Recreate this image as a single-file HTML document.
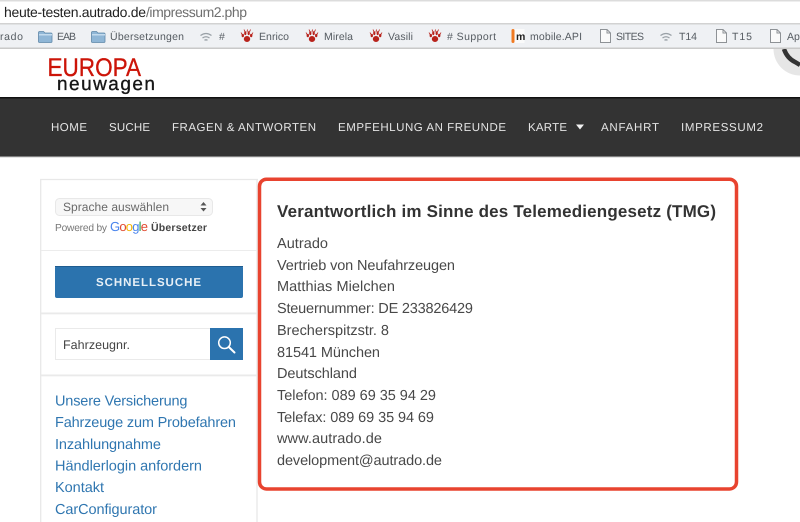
<!DOCTYPE html>
<html lang="de">
<head>
<meta charset="utf-8">
<title>Impressum</title>
<style>
html,body{margin:0;padding:0;background:#fff;width:800px;height:522px;overflow:hidden}
svg{display:block;filter:blur(.3px)}
text{font-family:"Liberation Sans",sans-serif;text-rendering:geometricPrecision}
.bm{font-size:10.5px;fill:#555b61}
.nav{font-size:11.5px;fill:#e4e4e4}
.b{font-size:14.5px;fill:#484848}
.l{font-size:14.5px;fill:#2f76b0}
</style>
</head>
<body>
<svg xmlns="http://www.w3.org/2000/svg" width="800" height="522" viewBox="0 0 800 522">
<defs>
<g id="folder"><path d="M0.5 3.5a1 1 0 0 1 1-1h4l1.500 1.500h6a1 1 0 0 1 1 1v7.500a1 1 0 0 1-1 1h-11.500a1 1 0 0 1-1-1z" fill="#8fb6d6" stroke="#5f88a8" stroke-width=".8"/><rect x="1" y="5" width="13" height="1.500" fill="#c3dbee"/></g>
<g id="wifi" fill="none" stroke="#9aa1a7" stroke-width="1.300"><path d="M0.500 3.500Q6 -0.500 11.500 3.500"/><path d="M2.500 6Q6 3.500 9.500 6"/><path d="M4.500 8.300Q6 7.300 7.500 8.300"/></g>
<g id="paw" fill="#b8231c"><ellipse cx="6" cy="9.500" rx="3.200" ry="3"/><ellipse cx="1.800" cy="6" rx="1.200" ry="1.800"/><ellipse cx="4.300" cy="3.700" rx="1.100" ry="1.900"/><ellipse cx="7.700" cy="3.700" rx="1.100" ry="1.900"/><ellipse cx="10.200" cy="6" rx="1.200" ry="1.800"/><path d="M3 0l1 2.500M6.500 0l-.5 2.500M9.500 0l-1 2.500M0 3l1 2M12 3l-1 2" stroke="#b8231c" stroke-width=".8"/></g>
<g id="doc"><path d="M.5.500h6.500l3.500 3.500v9.500h-10z" fill="#fafafa" stroke="#8e9296" stroke-width="1"/><path d="M7 .500v3.500h3.500" fill="none" stroke="#8e9296" stroke-width="1"/></g>
</defs>

<rect width="800" height="522" fill="#fff"/>

<!-- URL bar -->
<rect width="800" height="1.500" fill="#dcdcdc"/>
<text x="4" y="17" font-size="14" fill="#222" textLength="142">heute-testen.autrado.de</text>
<text x="146" y="17" font-size="14" fill="#6f6f6f" textLength="101">/impressum2.php</text>

<!-- Bookmarks bar -->
<rect y="23" width="800" height="26" fill="#eff1f4"/>
<rect y="23" width="800" height="1.500" fill="#d2d2d2"/>
<rect y="47.500" width="800" height="1.500" fill="#c9c9c9"/>
<text class="bm" x="0" y="40" textLength="23">rado</text>
<use href="#folder" x="38" y="29"/>
<text class="bm" x="57" y="40" textLength="19">EAB</text>
<use href="#folder" x="91" y="29"/>
<text class="bm" x="110" y="40" textLength="74">Übersetzungen</text>
<use href="#wifi" x="200" y="32"/>
<text class="bm" x="219" y="40">#</text>
<use href="#paw" x="241" y="29.500"/>
<text class="bm" x="259" y="40" textLength="30">Enrico</text>
<use href="#paw" x="306" y="29.500"/>
<text class="bm" x="324" y="40" textLength="29">Mirela</text>
<use href="#paw" x="370" y="29.500"/>
<text class="bm" x="388" y="40" textLength="25">Vasili</text>
<use href="#paw" x="429" y="29.500"/>
<text class="bm" x="447" y="40" textLength="49"># Support</text>
<rect x="511.500" y="29" width="3" height="14" rx="1.500" fill="#f07a22"/>
<rect x="514.500" y="29" width="10" height="14" fill="#fafafa"/>
<text x="516" y="40" font-size="10.500" font-weight="700" fill="#222">m</text>
<text class="bm" x="530" y="40" textLength="52">mobile.API</text>
<use href="#doc" x="600" y="29"/>
<text class="bm" x="616" y="40" textLength="28">SITES</text>
<use href="#wifi" x="660" y="32"/>
<text class="bm" x="679" y="40" textLength="18">T14</text>
<use href="#doc" x="716" y="29"/>
<text class="bm" x="732" y="40" textLength="20">T15</text>
<use href="#doc" x="770" y="29"/>
<text class="bm" x="787" y="40">Ap</text>

<!-- Logo -->
<text x="47.500" y="76" font-size="25.500" fill="#cc1408" stroke="#cc1408" stroke-width=".3" textLength="93.500" lengthAdjust="spacingAndGlyphs">EUROPA</text>
<text x="57" y="90" font-size="19" fill="#161616" stroke="#161616" stroke-width=".35" textLength="98">neuwagen</text>

<!-- Circle top right -->
<clipPath id="cc"><rect x="700" y="49" width="100" height="40"/></clipPath>
<g clip-path="url(#cc)">
<circle cx="800" cy="49" r="26.500" fill="#e6e6e6"/>
<path d="M784 49Q787 58 795 62L800 65" fill="none" stroke="#333" stroke-width="4.500"/>
</g>

<!-- Nav -->
<rect y="97" width="800" height="60" fill="#333"/>
<rect y="97" width="800" height="1.500" fill="#111"/>
<rect y="156.500" width="800" height="1" fill="#c8c8c8"/>
<text class="nav" x="51" y="131" textLength="36">HOME</text>
<text class="nav" x="109" y="131" textLength="41">SUCHE</text>
<text class="nav" x="172" y="131" textLength="144">FRAGEN &amp; ANTWORTEN</text>
<text class="nav" x="338" y="131" textLength="168">EMPFEHLUNG AN FREUNDE</text>
<text class="nav" x="528" y="131" textLength="39">KARTE</text>
<path d="M576 124.500h8l-4 5z" fill="#f2f2f2"/>
<text class="nav" x="601" y="131" textLength="58">ANFAHRT</text>
<text class="nav" x="681" y="131" textLength="82">IMPRESSUM2</text>

<!-- Sidebar -->
<path d="M40.700 522V179.500H258" fill="none" stroke="#e8e8e8" stroke-width="1.300"/>
<path d="M257 179V522" stroke="#e8e8e8" stroke-width="1.300"/>
<rect x="41" y="250" width="216" height="1" fill="#ececec"/>
<rect x="41" y="312.500" width="216" height="1.800" fill="#eaeaea"/>
<rect x="41" y="374.500" width="216" height="1.800" fill="#eaeaea"/>

<rect x="55.500" y="198.500" width="157" height="17" rx="4" fill="#f7f7f7" stroke="#e8e8e8"/>
<text x="63" y="211" font-size="12" fill="#6a6a6a" textLength="106">Sprache auswählen</text>
<path d="M200.500 205.500l3-3.500 3 3.500zM200.500 208l3 3.500 3-3.500z" fill="#555"/>

<text x="55" y="231" font-size="10.200" fill="#777" textLength="52">Powered by</text>
<text x="110" y="231" font-size="13" textLength="38"><tspan fill="#4a85ed">G</tspan><tspan fill="#e0492f">o</tspan><tspan fill="#f4b400">o</tspan><tspan fill="#4a85ed">g</tspan><tspan fill="#2aa24f">l</tspan><tspan fill="#e0492f">e</tspan></text>
<text x="151" y="231" font-size="10.500" font-weight="700" fill="#444" textLength="56">Übersetzer</text>

<rect x="55" y="266" width="188" height="32" rx="2" fill="#2b73ae"/>
<rect x="55" y="266" width="188" height="1" fill="#1f5c90"/>
<text x="96" y="286" font-size="11.500" font-weight="700" fill="#e8f0f6" textLength="105">SCHNELLSUCHE</text>

<rect x="55.500" y="328.500" width="155" height="31" fill="#fff" stroke="#eaeaea"/>
<text x="63" y="349" font-size="12.500" fill="#444" textLength="67">Fahrzeugnr.</text>
<rect x="210" y="328" width="33" height="32" fill="#2b73ae"/>
<circle cx="224.500" cy="342.700" r="5.800" fill="none" stroke="#fff" stroke-width="1.500"/>
<path d="M228.800 347L234.500 352.500" stroke="#fff" stroke-width="2" stroke-linecap="round"/>

<text class="l" x="55" y="405.500" textLength="132.500">Unsere Versicherung</text>
<text class="l" x="55" y="427" textLength="181">Fahrzeuge zum Probefahren</text>
<text class="l" x="55" y="449" textLength="106">Inzahlungnahme</text>
<text class="l" x="55" y="470.500" textLength="147">Händlerlogin anfordern</text>
<text class="l" x="55" y="492" textLength="49">Kontakt</text>
<text class="l" x="55" y="514" textLength="102">CarConfigurator</text>

<!-- Main content -->
<rect x="259.500" y="179.200" width="477" height="309.800" rx="7" fill="#fff" stroke="#e8432f" stroke-width="3.500"/>
<text x="277" y="217" font-size="17" font-weight="700" fill="#333" textLength="439">Verantwortlich im Sinne des Telemediengesetz (TMG)</text>
<text class="b" x="277" y="248" textLength="51">Autrado</text>
<text class="b" x="277" y="270" textLength="178">Vertrieb von Neufahrzeugen</text>
<text class="b" x="277" y="291" textLength="118">Matthias Mielchen</text>
<text class="b" x="277" y="313" textLength="196">Steuernummer: DE 233826429</text>
<text class="b" x="277" y="335" textLength="112">Brecherspitzstr. 8</text>
<text class="b" x="277" y="357" textLength="103">81541 München</text>
<text class="b" x="277" y="378" textLength="80">Deutschland</text>
<text class="b" x="277" y="400" textLength="159">Telefon: 089 69 35 94 29</text>
<text class="b" x="277" y="422" textLength="157">Telefax: 089 69 35 94 69</text>
<text class="b" x="277" y="443" textLength="105">www.autrado.de</text>
<text class="b" x="277" y="465" textLength="165">development@autrado.de</text>
</svg>
</body>
</html>
